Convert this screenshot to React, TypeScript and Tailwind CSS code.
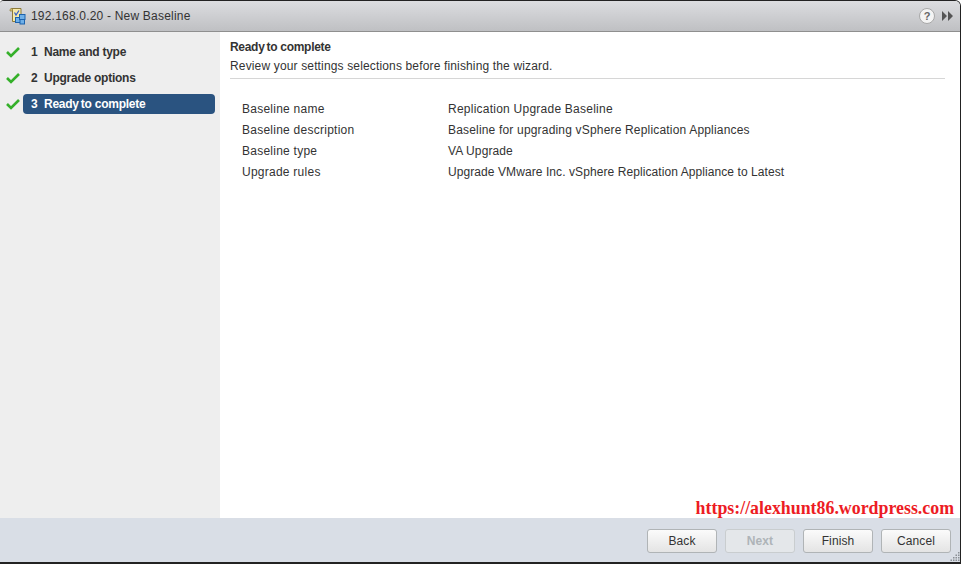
const steps = [
  { n: "1", label: <>Name and type</> },
  { n: "2", label: <>Upgrade options</> },
  { n: "3", label: <><span className="mr-[-1px]">Ready</span> to complete</>, active: true },
];

const rows = [
  { k: "Baseline name", v: "Replication Upgrade Baseline", t: "tracking-[0.24px]" },
  { k: "Baseline description", v: "Baseline for upgrading vSphere Replication Appliances", t: "tracking-[0.18px]" },
  { k: "Baseline type", v: "VA Upgrade", t: "tracking-[0.1px]" },
  { k: "Upgrade rules", v: "Upgrade VMware Inc. vSphere Replication Appliance to Latest", t: "tracking-[0.08px]" },
];

function Check() {
  return (
    <svg width="14" height="12" viewBox="0 0 14 12" className="shrink-0">
      <path d="M1 6 L5 10 L13 2" fill="none" stroke="#35b02a" strokeWidth="2.6" />
    </svg>
  );
}

function BaselineIcon() {
  return (
    <svg width="17" height="18" viewBox="0 0 17 18" className="shrink-0">
      <path d="M2.5 1.5 H12 V12.5 Q12 14.5 10 14.5 H3.5 V3.5 Q3.5 1.5 2.5 1.5 Z" fill="#f6e9a8" stroke="#8c7a3a" />
      <path d="M1 2.5 Q2 0.5 3.5 2.5 V4 H1 Z" fill="#d9c878" stroke="#8c7a3a" strokeWidth="0.7" />
      <path d="M5.5 5.5 L7 8 L10 3.5" fill="none" stroke="#3a62c8" strokeWidth="1.3" />
      <rect x="6.5" y="10.5" width="5.5" height="5" fill="#6fb0e8" stroke="#1d63ad" />
      <rect x="10.5" y="7.5" width="5.5" height="5" fill="#6fb0e8" stroke="#1d63ad" />
      <rect x="11" y="12.5" width="4.5" height="4.5" fill="#6fb0e8" stroke="#1d63ad" />
    </svg>
  );
}

function WizardButton({ label, disabled }: { label: string; disabled?: boolean }) {
  return (
    <button
      className={`h-6 w-[70px] rounded-[3px] border text-[12px] tracking-[0.1px] ${
        disabled
          ? "border-[#c9cdcf] bg-[#e4e7ea] font-bold text-[#aeb4b8]"
          : "border-[#b0b4b6] bg-gradient-to-b from-[#fbfbfb] to-[#e4e4e4] text-[#333333]"
      }`}
    >
      {label}
    </button>
  );
}

export default function App() {
  return (
    <div className="relative flex h-[564px] w-[961px] flex-col overflow-hidden rounded-tl-[4px] rounded-tr-[6px] border-t border-r border-b-2 border-[#222222] font-['Liberation_Sans',sans-serif] text-[12px] text-[#333333]">
      {/* Title bar */}
      <header className="flex h-[31px] shrink-0 items-center border-b border-[#8f8f8f] bg-gradient-to-b from-[#dcdde0] to-[#bfc0c3] pl-[9px] pr-[6px]">
        <BaselineIcon />
        <span className="ml-[5px] text-[12px] tracking-[0.2px] text-[#333333]">192.168.0.20 - New Baseline</span>
        <span className="ml-auto flex h-4 w-4 items-center justify-center rounded-full border border-[#a8a8a8] bg-[#f4f4f4] text-[11px] font-bold leading-none text-[#666666]">
          ?
        </span>
        <svg width="12" height="10" viewBox="0 0 12 10" className="ml-[7px]">
          <path d="M0 0 L5 5 L0 10 Z M6 0 L11 5 L6 10 Z" fill="#555555" />
        </svg>
      </header>

      <div className="flex min-h-0 flex-1">
        {/* Steps */}
        <nav className="flex w-[220px] shrink-0 flex-col gap-[6px] bg-[#eeeeee] pt-[10px] pl-[6px]">
          {steps.map((s) => (
            <div key={s.n} className="flex h-5 items-center">
              <Check />
              <div
                className={`ml-[3px] flex h-5 w-[192px] items-center rounded-[4px] pl-2 font-bold ${
                  s.active ? "bg-[#2a5380] text-white" : "text-[#333333]"
                }`}
              >
                <span className="w-[13px]">{s.n}</span>
                <span className="tracking-[-0.25px]">{s.label}</span>
              </div>
            </div>
          ))}
        </nav>

        {/* Content */}
        <main className="relative min-w-0 flex-1 bg-white pt-[8px] pl-[10px] pr-[15px]">
          <div className="h-[15px] font-bold leading-[15px] tracking-[-0.3px]">
            <span className="mr-[-1px]">Ready</span> to complete
          </div>
          <div className="mt-[4px] h-[15px] leading-[15px] tracking-[0.15px]">Review your settings selections before finishing the wizard.</div>
          <div className="mt-[4px] border-b border-[#d6d6d6]" />
          <div className="mt-[23px] flex flex-col gap-[6px] pl-[12px]">
            {rows.map((r) => (
              <div key={r.k} className="flex h-[15px] items-center leading-[15px]">
                <span className="w-[206px] shrink-0 tracking-[0.25px]">{r.k}</span>
                <span className={r.t}>{r.v}</span>
              </div>
            ))}
          </div>
          <span className="absolute right-[6px] bottom-[1px] font-['Liberation_Serif',serif] text-[17.85px] leading-[18px] font-bold text-[#ed1c24]">
            https://alexhunt86.wordpress.com
          </span>
        </main>
      </div>

      {/* Footer */}
      <footer className="relative flex h-[44px] shrink-0 items-start justify-end gap-2 bg-[#d9dee6] pt-[11px] pr-[9px]">
        <WizardButton label="Back" />
        <WizardButton label="Next" disabled />
        <WizardButton label="Finish" />
        <WizardButton label="Cancel" />
        <svg width="10" height="10" viewBox="0 0 10 10" className="absolute right-0 bottom-0">
          <path d="M8 0h1.5v1.5H8zM5.5 2.5H7V4H5.5zM8 2.5h1.5V4H8zM3 5h1.5v1.5H3zM5.5 5H7v1.5H5.5zM8 5h1.5v1.5H8zM0.5 7.5H2V9H0.5zM3 7.5h1.5V9H3zM5.5 7.5H7V9H5.5zM8 7.5h1.5V9H8z" fill="#8a8f95" />
        </svg>
      </footer>
    </div>
  );
}
